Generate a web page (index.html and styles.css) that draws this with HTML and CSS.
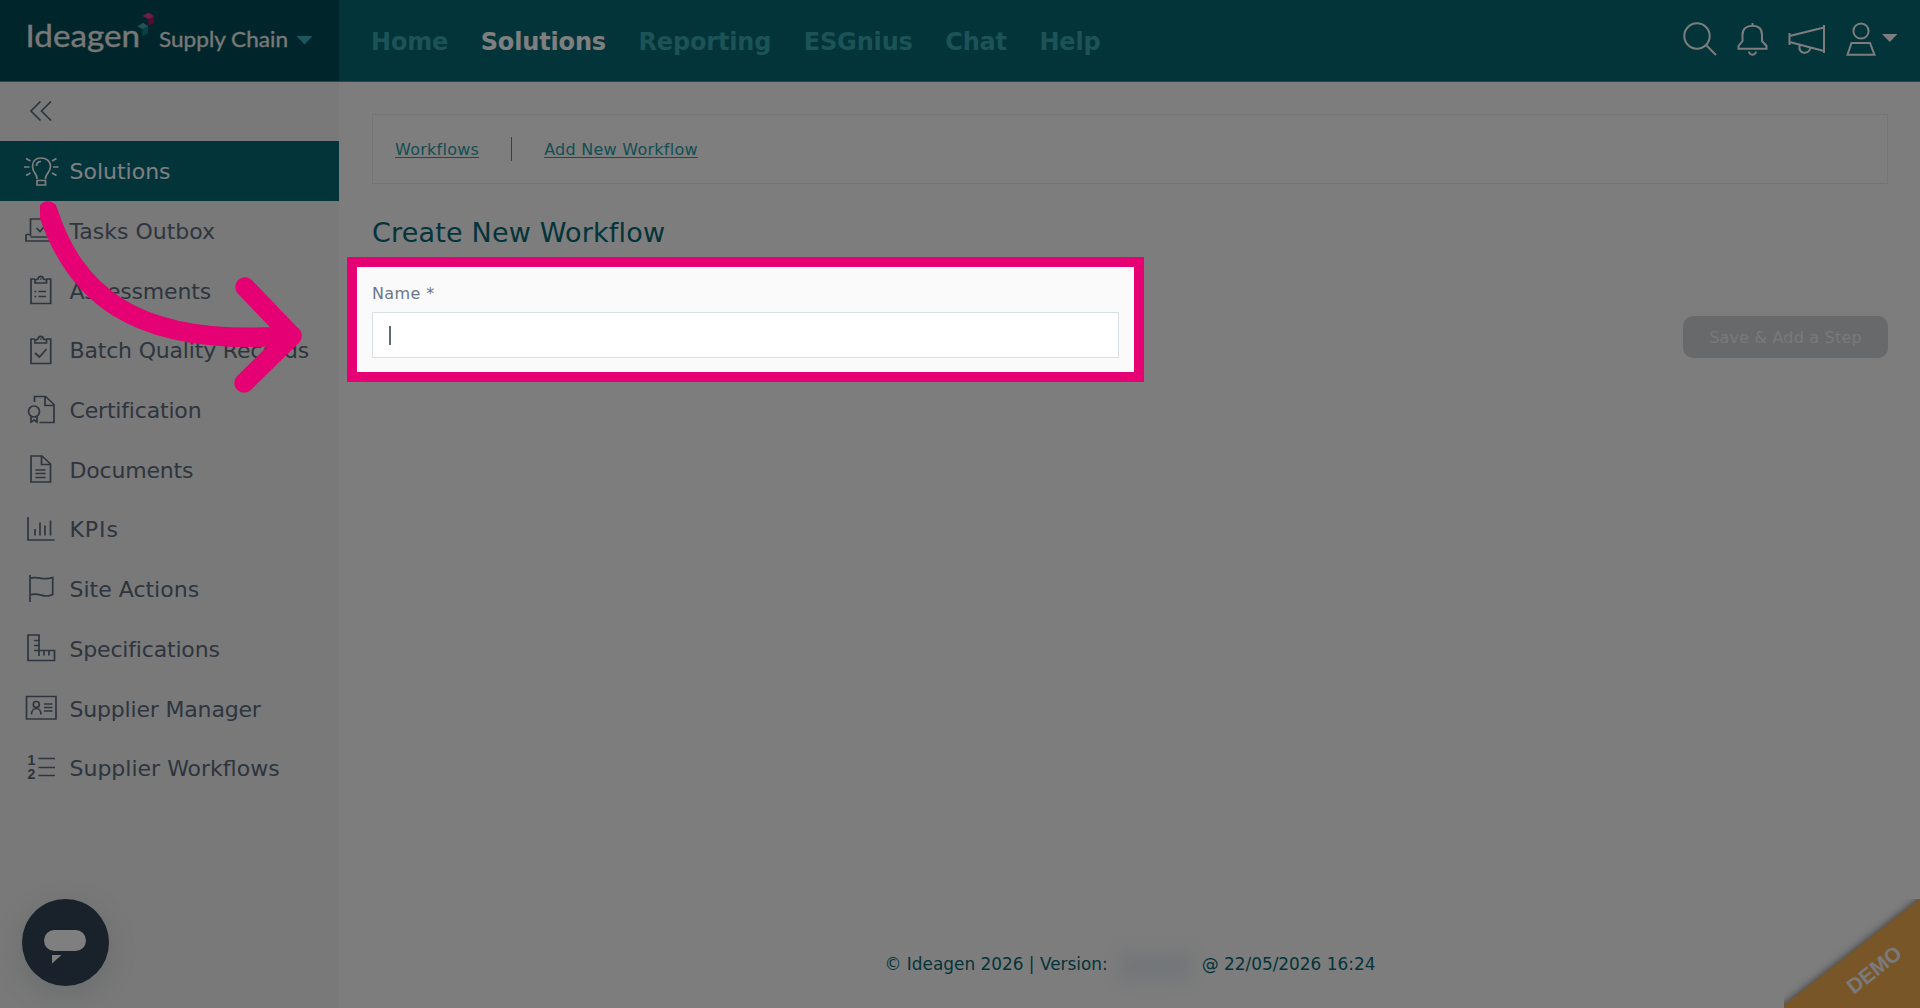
FILE: index.html
```html
<!DOCTYPE html>
<html lang="en">
<head>
<meta charset="utf-8">
<title>Create New Workflow</title>
<link rel="stylesheet" href="styles.css">
</head>
<body>
<div class="app">
  <header class="topbar">
    <div class="brand">
      <svg class="logo" width="339" height="81" viewBox="0 0 339 81">
        <text class="logo-main" x="25.500" y="47" textLength="114.500" lengthAdjust="spacingAndGlyphs">Ideagen</text>
        <path d="M137.500 26.500L143 23L148 26L148 33L142.500 36.500L142.500 29Z" fill="#078494"/>
        <path d="M137.500 26.500L143 23L148 26L142.500 29Z" fill="#4aa5b0"/>
        <path d="M142.500 16L148.500 12.800L154 16L154 23L148.500 26L148.500 19Z" fill="#b21867"/>
        <path d="M142.500 16L148.500 12.800L154 16L148.500 19Z" fill="#d8408c"/>
        <text class="logo-sub" x="159" y="46.800" textLength="129" lengthAdjust="spacingAndGlyphs">Supply Chain</text>
        <path d="M296.500 36H312.500L304.500 44.500Z" fill="#34b0ba"/>
      </svg>
    </div>
    <nav class="mainnav">
      <a>Home</a><a class="current">Solutions</a><a>Reporting</a><a>ESGnius</a><a>Chat</a><a>Help</a>
    </nav>
    <svg class="tools" width="240" height="81" viewBox="0 0 240 81">
      <circle cx="17" cy="36" r="12.700"/><path d="M26.500 45.500L36 55"/>
      <path d="M72.500 23V26M58.500 48.700V46L62.500 41V35C62.500 29 66.500 25.700 72.500 25.700S82 29 82 35V41L86.500 46V48.700ZM69 51.500C69.500 55.800 75.500 55.800 76 51.500"/>
      <path d="M109.500 33V45M109.500 36L144 27.500M109.500 42L144 51M144 25V53M119.500 45.500C118 54.500 128.500 55 130.500 48"/>
      <circle cx="181" cy="31" r="7.600"/><path d="M171.500 43H190L194.500 54.800H167.500Z"/>
      <path class="solid" d="M202 34H217.500L209.800 42Z"/>
    </svg>
  </header>
  <div class="body">
    <aside class="sidebar">
      <div class="collapse"><svg width="22" height="20" viewBox="0 0 22 20"><path d="M10.500 .5L1 10L10.500 19.500M21 .5L11.500 10L21 19.500"/></svg></div>
      <ul class="menu">
        <li class="active"><svg viewBox="0 0 36 32"><path d="M14 24V23C14 19.500 9.500 17 9.500 11.500C9.500 6 13 3 18 3S27.500 6 27.500 11.500C27.500 17 22.500 19.500 22.500 23V24M14 25.500H22.500V30H14ZM13.500 11C13.500 8 15.500 6.500 18 6.500M1 12H6.500M30 12H35.500M3 3.500L7.500 6M33.500 3.500L29 6M3 20.500L7.500 18M33.500 20.500L29 18"/></svg><span>Solutions</span></li>
        <li><svg viewBox="0 0 36 32"><path d="M7.500 21V4H28.500V21M3 19.500V26H33V19.500M3 19.500H6.500M33 19.500H29.500M7.500 22H28.500M13.500 13L17 16.500L23 9.500"/></svg><span>Tasks Outbox</span></li>
        <li class="tight"><svg viewBox="0 0 36 32"><path d="M12 5H8V29.500H27.700V5H23M12 9H23.500V6L20.500 5C20 1.500 15.500 1.500 15 5L12 6ZM15.500 17.500H23M15.500 22.500H23M11.500 17.500H13.200M11.500 22.500H13.200M17.200 5H18.500"/></svg><span>Assessments</span></li>
        <li class="tight"><svg viewBox="0 0 36 32"><path d="M12 5H8V29.500H27.700V5H23M12 9H23.500V6L20.500 5C20 1.500 15.500 1.500 15 5L12 6ZM12 19L16.500 23L23.500 15M17.200 5H18.500"/></svg><span>Batch Quality Records</span></li>
        <li class="tight"><svg viewBox="0 0 36 32"><path d="M11.500 8V2.500H22.500L31 10.500V28.500H16.500M22 2.500V11.500H31M8 22V28L11.200 26L14 28V22"/><circle cx="11" cy="17.500" r="5.500"/></svg><span>Certification</span></li>
        <li class="tight"><svg viewBox="0 0 36 32"><path d="M8 3H19L27.500 11V29H8ZM18.500 3V11.500H27.500M12.500 17H22.500M12.500 20.500H22.500M12.500 24.500H22.500"/></svg><span>Documents</span></li>
        <li class="loose"><svg viewBox="0 0 36 32"><path d="M5 4V27H31.500M12 16V22.500M17 9.500V22.500M22 12.500V22.500M27.500 7.500V22.500"/></svg><span>KPIs</span></li>
        <li><svg viewBox="0 0 36 32"><path d="M7 2V29M7 5.500C15 2 19 8.500 29.700 4.500V21.500C20 26.500 17 18.500 7 22"/></svg><span>Site Actions</span></li>
        <li class="tight"><svg viewBox="0 0 36 32"><path d="M5 3H16V18.500H31.500V28.500H5ZM11 8.500H16M11 13.500H16M11 18.500H16M16 18.500V24M21 18.500V23.500M26 18.500V23.500"/></svg><span>Specifications</span></li>
        <li class="tight"><svg viewBox="0 0 36 32"><path d="M3.500 4.500H33V27H3.500ZM8.500 22.500C8.500 14.500 18 14.500 18 22.500M21 12H29.500M21 15.500H29.500M21 19H29.500"/><circle cx="13.300" cy="12.500" r="3"/></svg><span>Supplier Manager</span></li>
        <li><svg viewBox="0 0 36 32"><path d="M15.500 6.500H32M15.500 15.500H32M15.500 23.500H32"/><text x="4.500" y="13">1</text><text x="4.500" y="27">2</text></svg><span>Supplier Workflows</span></li>
      </ul>
    </aside>
    <main class="content">
      <div class="crumbs"><a>Workflows</a><i></i><a>Add New Workflow</a></div>
      <h1>Create New Workflow</h1>
      <div class="form">
        <div class="field"><label>Name *</label><div class="input"><span class="caret"></span></div></div>
        <button class="save" disabled>Save &amp; Add a Step</button>
      </div>
      <footer><span>© Ideagen 2026 | Version:</span><span class="redacted"></span><span>@ 22/05/2026 16:24</span></footer>
    </main>
  </div>
  <div class="chat"><svg width="87" height="87" viewBox="0 0 87 87"><rect x="22" y="31" width="42" height="21" rx="10.500"/><path d="M30 56H39.500L30 64.500Z"/></svg></div>
  <svg class="demo" width="136" height="109" viewBox="0 0 136 109">
    <path class="ribbon" d="M-20 122L156 -16V129H-20Z"/>
    <text x="0" y="7.500" text-anchor="middle" transform="translate(90 70.500) rotate(-38)">DEMO</text>
  </svg>
  <div class="spotlight"></div>
  <svg class="arrow" width="270" height="210" viewBox="40 190 270 210"><path d="M47.800 211C73 288 128 349 292 335.500M245 287L292 336L244 383"/></svg>
</div>
</body>
</html>
```
FILE: styles.css
```css
* { box-sizing: border-box; }
body { margin: 0; font-family: "DejaVu Sans", Verdana, sans-serif; color: #5e6b7d; background: #fafafa; }
.app { position: relative; width: 1920px; height: 1008px; overflow: hidden; display: flex; flex-direction: column; }

.topbar { display: flex; height: 82px; background: #066874; border-bottom: 1px solid #4a8f93; flex: none; }
.brand { width: 339px; background: #004c56; }
.logo { display: block; }
.logo text { font-family: Lato, sans-serif; fill: #f0f0f0; stroke: #f0f0f0; stroke-width: .3; }
.logo-main { font-size: 31.5px; }
.logo-sub { font-size: 22px; }
.mainnav { flex: 1; display: flex; gap: 32.5px; padding: 28px 0 0 32px; font-size: 24px; line-height: 28px; font-weight: bold; letter-spacing: -.16px; color: #36a6ae; }
.mainnav .current { color: #fff; }
.tools { fill: none; stroke: #fafafa; stroke-width: 2; }
.tools .solid { fill: #fafafa; stroke: none; }

.body { display: flex; flex: 1; min-height: 0; }
.sidebar { width: 339px; background: #f2f2f2; }
.collapse { height: 59px; padding: 18.500px 0 0 30px; }
.collapse svg { display: block; }
.sidebar svg { fill: none; stroke: #5e6b7d; stroke-width: 1.700; }
.menu { list-style: none; margin: 0; padding: 0; font-size: 22px; }
.menu li { display: flex; align-items: center; height: 59.700px; padding-left: 23px; gap: 10.500px; white-space: nowrap; }
.menu span { padding-top: 2px; }
.menu .tight { letter-spacing: -.18px; }
.menu .loose { letter-spacing: .9px; }
.menu svg { width: 36px; height: 32px; flex: none; }
.menu text { font: bold 14px "Liberation Sans", sans-serif; letter-spacing: 0; fill: #5e6b7d; stroke: none; }
.menu .active { background: #066874; color: #fff; }
.menu .active svg { stroke: #fff; }

.content { flex: 1; display: flex; flex-direction: column; padding: 32px 32px 0 33px; }
.crumbs { height: 70px; border: 1px solid #eaeaea; background: #fdfdfd; padding-left: 22px; display: flex; align-items: center; font-size: 16px; color: #2a9ca6; letter-spacing: .26px; }
.crumbs a { text-decoration: underline; text-underline-offset: 2px; }
.crumbs i { width: 1px; height: 24px; margin: 0 32px; background: #2a9ca6; }
h1 { margin: 32px 0 0; font-size: 27px; line-height: 34px; font-weight: normal; letter-spacing: .18px; color: #066874; }
.form { display: flex; justify-content: space-between; align-items: flex-end; margin-top: 34px; }
.field { width: 747px; }
label { display: block; font-size: 16px; line-height: 20px; letter-spacing: .4px; color: #6b7789; }
.input { margin-top: 8px; height: 46px; border: 1px solid #d8e0e3; background: #fff; padding: 13px 16px; }
.caret { display: block; width: 2px; height: 19px; background: #5e6b7d; }
.save { width: 205px; height: 42px; border: 0; border-radius: 10px; background: #d0d3d7; color: #f2f2f2; font: 16px "DejaVu Sans", sans-serif; letter-spacing: .2px; padding: 0; }
footer { margin-top: auto; height: 54px; display: flex; justify-content: center; font-size: 16.900px; line-height: 20px; color: #066874; white-space: nowrap; }
.redacted { width: 66px; height: 24px; margin: 0 14px; background: #e8eef1; filter: blur(7px); box-shadow: 0 0 8px 4px #e8eef1; }

.chat { position: absolute; left: 22px; top: 899px; width: 87px; height: 87px; border-radius: 50%; background: #324454; box-shadow: 0 8px 30px rgba(50,68,84,.15); }
.chat svg { display: block; fill: #fff; }
.demo { position: absolute; right: 0; bottom: 0; overflow: hidden; }
.ribbon { fill: #f0ac50; filter: drop-shadow(0 0 4px rgba(0,0,0,.6)); }
.demo text { font: bold 21px "Liberation Sans", sans-serif; fill: #f4f4f4; }

/* Dims everything outside the highlighted field */
.spotlight { position: absolute; left: 347px; top: 257px; width: 797px; height: 125px; border: 10px solid #e50073; box-shadow: 0 0 0 2000px rgba(0,0,0,.5); }
.arrow { position: absolute; left: 40px; top: 190px; fill: none; stroke: #e50073; stroke-width: 19.500; stroke-linecap: round; stroke-linejoin: round; }
```
